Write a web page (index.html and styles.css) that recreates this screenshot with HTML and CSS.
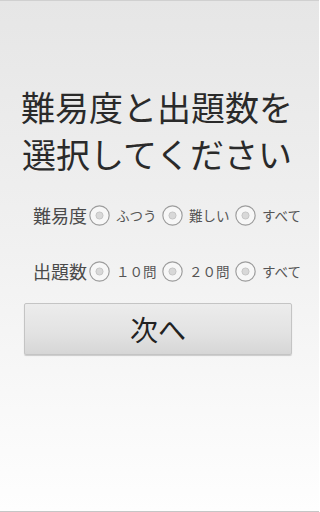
FILE: index.html
```html
<!DOCTYPE html>
<html lang="ja">
<head>
<meta charset="utf-8">
<link rel="stylesheet" href="styles.css">
</head>
<body>
<div class="screen">
  <h1 class="title">難易度と出題数を<br>選択してください</h1>
  <div class="row row-level">
    <span class="label">難易度</span>
    <span class="opt"><svg class="radio" viewBox="0 0 20 20"><circle cx="10" cy="10" r="9.2" fill="#f7f7f7" stroke="#9c9c9c" stroke-width="1.1"/><circle cx="10" cy="10" r="3.4" fill="#d8d8d8" stroke="#c0c0c0" stroke-width="0.8"/></svg><span class="opt-text">ふつう</span></span>
    <span class="opt"><svg class="radio" viewBox="0 0 20 20"><circle cx="10" cy="10" r="9.2" fill="#f7f7f7" stroke="#9c9c9c" stroke-width="1.1"/><circle cx="10" cy="10" r="3.4" fill="#d8d8d8" stroke="#c0c0c0" stroke-width="0.8"/></svg><span class="opt-text">難しい</span></span>
    <span class="opt"><svg class="radio" viewBox="0 0 20 20"><circle cx="10" cy="10" r="9.2" fill="#f7f7f7" stroke="#9c9c9c" stroke-width="1.1"/><circle cx="10" cy="10" r="3.4" fill="#d8d8d8" stroke="#c0c0c0" stroke-width="0.8"/></svg><span class="opt-text">すべて</span></span>
  </div>
  <div class="row row-count">
    <span class="label">出題数</span>
    <span class="opt"><svg class="radio" viewBox="0 0 20 20"><circle cx="10" cy="10" r="9.2" fill="#f7f7f7" stroke="#9c9c9c" stroke-width="1.1"/><circle cx="10" cy="10" r="3.4" fill="#d8d8d8" stroke="#c0c0c0" stroke-width="0.8"/></svg><span class="opt-text">１０問</span></span>
    <span class="opt"><svg class="radio" viewBox="0 0 20 20"><circle cx="10" cy="10" r="9.2" fill="#f7f7f7" stroke="#9c9c9c" stroke-width="1.1"/><circle cx="10" cy="10" r="3.4" fill="#d8d8d8" stroke="#c0c0c0" stroke-width="0.8"/></svg><span class="opt-text">２０問</span></span>
    <span class="opt"><svg class="radio" viewBox="0 0 20 20"><circle cx="10" cy="10" r="9.2" fill="#f7f7f7" stroke="#9c9c9c" stroke-width="1.1"/><circle cx="10" cy="10" r="3.4" fill="#d8d8d8" stroke="#c0c0c0" stroke-width="0.8"/></svg><span class="opt-text">すべて</span></span>
  </div>
  <button class="next">次へ</button>
</div>
</body>
</html>
```
FILE: styles.css
```css
html, body {
  margin: 0;
  padding: 0;
}
body {
  width: 319px;
  height: 512px;
  overflow: hidden;
  font-family: "Noto Sans CJK JP", "Noto Sans", sans-serif;
}
.screen {
  box-sizing: border-box;
  width: 319px;
  height: 512px;
  border-top: 1px solid #d0d0d0;
  border-bottom: 1px solid #c6c6c6;
  background: linear-gradient(to bottom, #e6e6e6 0%, #f0f0f0 45%, #fefefe 100%);
  display: flex;
  flex-direction: column;
}
.title {
  margin: 82px 0 0 0;
  padding-right: 5px;
  font-size: 34px;
  line-height: 47px;
  font-weight: 400;
  color: #2a2a2a;
  text-align: center;
  white-space: nowrap;
}
.row {
  display: flex;
  align-items: center;
  height: 30px;
  padding-left: 33px;
}
.row-level {
  margin-top: 23px;
}
.row-count {
  margin-top: 26px;
}
.label {
  font-size: 18px;
  color: #4a4a4a;
  width: 55px;
  white-space: nowrap;
  margin-right: 1px;
}
.opt {
  display: flex;
  align-items: center;
  margin-right: 6px;
}
.radio {
  width: 21px;
  height: 21px;
  display: block;
}
.opt-text {
  margin-left: 6px;
  font-size: 13.5px;
  color: #555;
  width: 40px;
  white-space: nowrap;
}
.next {
  margin: 17px 0 0 24px;
  width: 268px;
  height: 52px;
  border: 1px solid #c4c4c4;
  border-radius: 2px;
  background: linear-gradient(to bottom, #ececec 0%, #e2e2e2 60%, #d6d6d6 100%);
  box-shadow: 0 1px 1px rgba(0,0,0,0.18);
  font-family: "Noto Sans CJK JP", "Noto Sans", sans-serif;
  font-size: 28px;
  color: #222;
  padding: 0;
}
```
